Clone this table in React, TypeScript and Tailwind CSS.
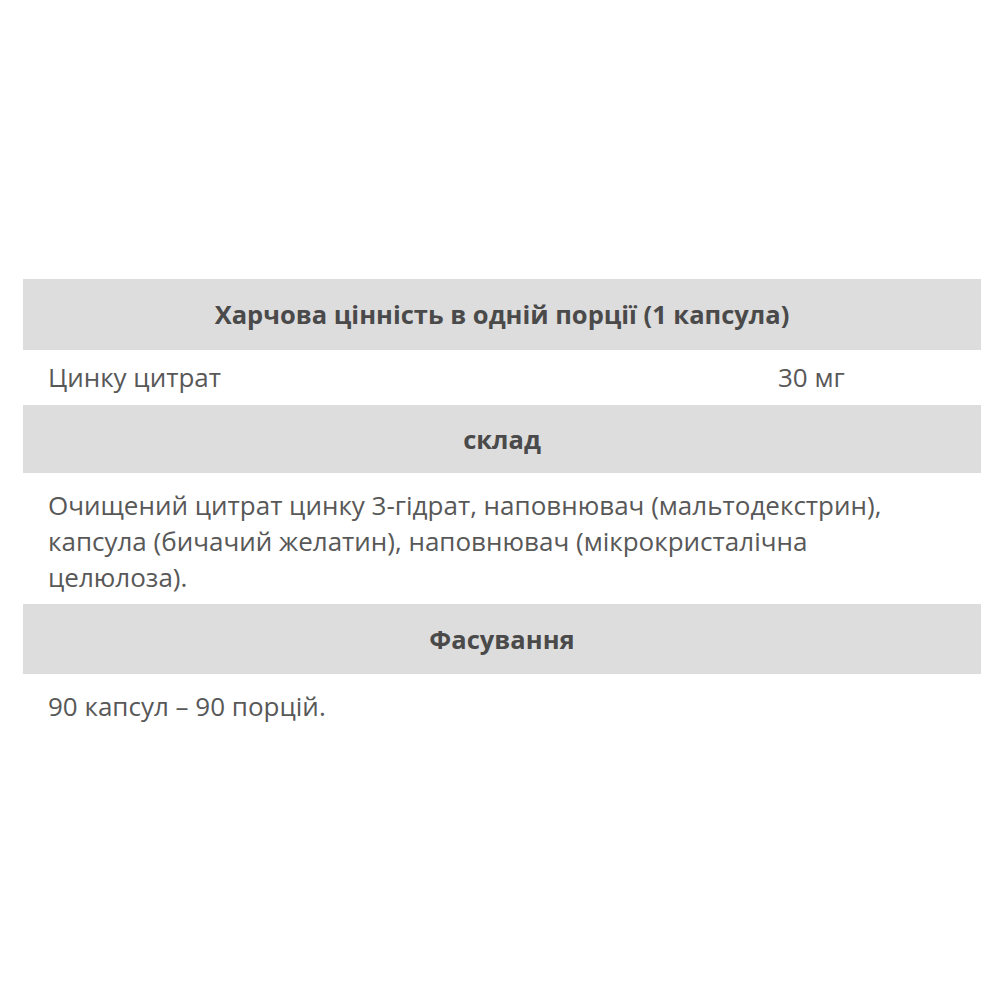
export default function App() {
  return (
    <div className="w-[1000px] h-[1000px] bg-white pt-[279px] px-[23px] font-['Open_Sans',sans-serif] text-[#585858] text-[26px]">
      <div className="w-[958px]">
        <div className="bg-[#dddddd] h-[71px] flex items-center justify-center font-bold text-[25.5px] text-[#4a4a4a]">
          Харчова цінність в одній порції (1 капсула)
        </div>
        <div className="h-[55px] flex items-center">
          <div className="w-[730px] pl-[25px]">Цинку цитрат</div>
          <div className="pl-[25px]">30 мг</div>
        </div>
        <div className="bg-[#dddddd] h-[68px] flex items-center justify-center font-bold text-[25.5px] text-[#4a4a4a]">
          склад
        </div>
        <div className="h-[131px] pl-[25px] pr-[76px] pt-[14px] leading-[36px]">
          Очищений цитрат цинку 3-гідрат, наповнювач (мальтодекстрин), капсула (бичачий желатин), наповнювач (мікрокристалічна целюлоза).
        </div>
        <div className="bg-[#dddddd] h-[70px] flex items-center justify-center font-bold text-[25.5px] text-[#4a4a4a]">
          Фасування
        </div>
        <div className="h-[64px] flex items-center px-[25px]">90 капсул – 90 порцій.</div>
      </div>
    </div>
  )
}
